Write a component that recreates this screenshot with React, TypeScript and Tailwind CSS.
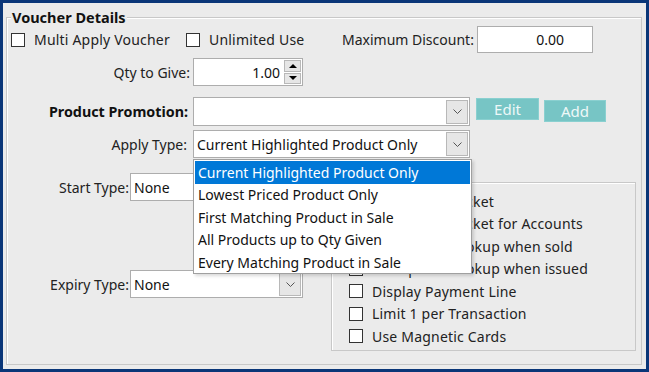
import React from 'react';

const font = { fontFamily: '"Noto Sans", "Open Sans", sans-serif' };

const Check: React.FC<{ label: string }> = ({ label }) => (
  <div className="flex items-center">
    <div className="w-[14px] h-[14px] border border-[#333] bg-white"></div>
    <span className="ml-[9px] text-[14px] tracking-[0.2px] text-[#222] whitespace-nowrap">{label}</span>
  </div>
);

const Chevron: React.FC = () => (
  <svg width="9" height="5" viewBox="0 0 9 5" fill="none">
    <path d="M0.5 0.5L4.5 4.5L8.5 0.5" stroke="#555" strokeWidth="1" />
  </svg>
);

interface ComboProps {
  value?: string;
  width: string;
}

const Combo: React.FC<ComboProps> = ({ value = '', width }) => (
  <div className={`${width} h-[28px] bg-white border border-[#adadad] flex items-center`}>
    <span className="flex-1 pl-[3px] text-[14px] text-[#111] whitespace-nowrap overflow-hidden">{value}</span>
    <div className="w-[22px] h-[24px] mr-[1px] bg-[#e6e6e6] border border-[#b8b8b8] flex items-center justify-center">
      <Chevron />
    </div>
  </div>
);

const options = [
  'Current Highlighted Product Only',
  'Lowest Priced Product Only',
  'First Matching Product in Sale',
  'All Products up to Qty Given',
  'Every Matching Product in Sale',
];

export default function App() {
  return (
    <div className="w-[649px] h-[372px] bg-[#0a3678] p-[3px]" style={font}>
      <div className="w-full h-full bg-[#ebebeb] pt-[14px] pl-[3px] pr-[4px] pb-[5px]">
        {/* Voucher Details group */}
        <div className="relative h-[348px] border border-[#c8c8c8] shadow-[inset_1px_1px_0_#fff]">
          <span className="absolute left-[4px] -top-[11px] px-[1px] bg-[#ebebeb] text-[14.5px] font-bold text-[#111] leading-[20px]">
            Voucher Details
          </span>

          {/* Row 1 */}
          <div className="flex items-center h-[27px] mt-[8px] pl-[4px]">
            <div className="w-[175px]"><Check label="Multi Apply Voucher" /></div>
            <div className="w-[156px]"><Check label="Unlimited Use" /></div>
            <span className="w-[135px] text-[14px] text-[#222] whitespace-nowrap">Maximum Discount:</span>
            <div className="w-[116px] h-[27px] bg-white border border-[#adadad] flex items-center justify-end pr-[28px] text-[14px] text-[#111]">
              0.00
            </div>
          </div>

          {/* Qty to Give */}
          <div className="flex items-center mt-[5px]">
            <span className="w-[183px] text-right text-[14px] text-[#222]">Qty to Give:</span>
            <div className="ml-[3px] w-[110px] h-[28px] bg-white border border-[#adadad] flex items-center">
              <span className="flex-1 text-right pr-[4px] text-[14px] text-[#111]">1.00</span>
              <div className="w-[17px] h-[24px] mr-[1px] flex flex-col gap-[1px]">
                <div className="flex-1 bg-[#e6e6e6] border border-[#b8b8b8] flex items-center justify-center">
                  <div className="w-0 h-0 border-l-[4px] border-r-[4px] border-b-[4px] border-l-transparent border-r-transparent border-b-black"></div>
                </div>
                <div className="flex-1 bg-[#e6e6e6] border border-[#b8b8b8] flex items-center justify-center">
                  <div className="w-0 h-0 border-l-[4px] border-r-[4px] border-t-[4px] border-l-transparent border-r-transparent border-t-black"></div>
                </div>
              </div>
            </div>
          </div>

          {/* Product Promotion */}
          <div className="flex items-start mt-[11px]">
            <span className="w-[181px] h-[29px] flex items-center justify-end text-[14.3px] font-bold text-[#111] whitespace-nowrap">
              Product Promotion:
            </span>
            <div className="ml-[5px]"><Combo width="w-[277px] !h-[29px]" /></div>
            <button className="ml-[6px] mt-[1px] w-[63px] h-[22px] bg-[#77c5c5] border border-[#8ad0d0] text-[15px] text-[#eef8f8] leading-none">
              Edit
            </button>
            <button className="ml-[5px] mt-[3px] w-[62px] h-[22px] bg-[#77c5c5] border border-[#8ad0d0] text-[15px] text-[#eef8f8] leading-none">
              Add
            </button>
          </div>

          {/* Apply Type */}
          <div className="flex items-center mt-[4px]">
            <span className="w-[180px] text-right text-[14px] text-[#222]">Apply Type:</span>
            <div className="ml-[6px]"><Combo width="w-[277px]" value="Current Highlighted Product Only" /></div>
          </div>

          {/* Lower section */}
          <div className="flex">
            <div className="w-[324px]">
              <div className="flex items-center mt-[15px]">
                <span className="w-[122px] text-right text-[14px] text-[#222] whitespace-nowrap">Start Type:</span>
                <div className="ml-[1px]"><Combo width="w-[173px]" value="None" /></div>
              </div>
              <div className="flex items-center mt-[69px]">
                <span className="w-[122px] text-right text-[14px] text-[#222] whitespace-nowrap">Expiry Type:</span>
                <div className="ml-[1px]"><Combo width="w-[173px]" value="None" /></div>
              </div>
            </div>
            <div className="mt-[24px] w-[305px] h-[169px] border border-[#c8c8c8] shadow-[inset_1px_1px_0_#fff] pl-[17px] pt-[7px]">
              {[
                'Print Sales Docket',
                'Print Sales Docket for Accounts',
                'Prompt for Lookup when sold',
                'Prompt for Lookup when issued',
                'Display Payment Line',
                'Limit 1 per Transaction',
                'Use Magnetic Cards',
              ].map((t) => (
                <div key={t} className="h-[22.5px] flex items-center">
                  <Check label={t} />
                </div>
              ))}
            </div>
          </div>

          {/* Open dropdown list */}
          <div className="absolute left-[186px] top-[141px] w-[279px] h-[115px] bg-white border border-[#a0a0a0] shadow-[2px_2px_3px_rgba(0,0,0,0.15)] p-[1px]">
            {options.map((o, i) => (
              <div
                key={o}
                className={`h-[22.5px] flex items-center pl-[3px] text-[14px] whitespace-nowrap ${
                  i === 0 ? 'bg-[#0078d7] text-white' : 'text-[#111]'
                }`}
              >
                {o}
              </div>
            ))}
          </div>
        </div>
      </div>
    </div>
  );
}
